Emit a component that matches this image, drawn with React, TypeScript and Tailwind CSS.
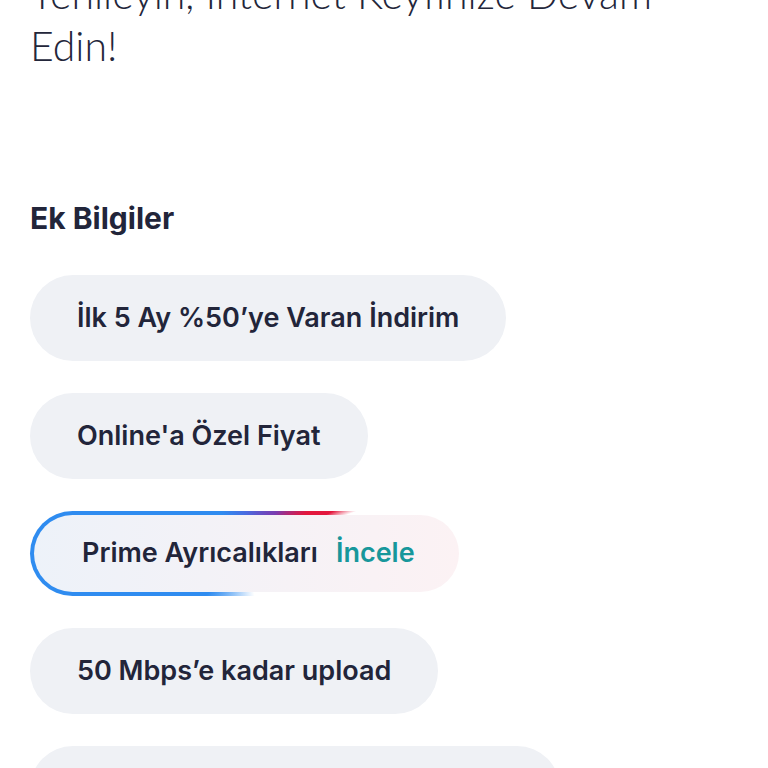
const items = [
  "İlk 5 Ay %50’ye Varan İndirim",
  "Online'a Özel Fiyat",
];

const moreItems = [
  "50 Mbps’e kadar upload",
  "Ücretsiz Kurulum, Modem Hediye",
];

function InfoPill({ label }: { label: string }) {
  return (
    <div className="h-[86px] rounded-full bg-[#eff1f5] px-[47px] flex items-center text-[27px] font-semibold text-[#22253a]">
      {label}
    </div>
  );
}

export default function App() {
  return (
    <div
      className="w-[768px] h-[768px] overflow-hidden bg-white"
      style={{ fontFamily: "Inter, 'Noto Sans', sans-serif" }}
    >
      <div className="px-[30px]">
        <h1
          className="mt-[-32px] text-[41px] leading-[52px] font-light text-[#23263a]"
          style={{ fontFamily: "Lato, sans-serif" }}
        >
          Yenileyin, İnternet Keyfinize Devam
          <br />
          Edin!
        </h1>

        <h2 className="mt-[127px] text-[30px] leading-[38px] font-bold text-[#22253a]">
          Ek Bilgiler
        </h2>

        <div className="mt-[38px] flex flex-col items-start gap-[32px]">
          {items.map((label) => (
            <InfoPill key={label} label={label} />
          ))}

          {/* highlighted pill with gradient border */}
          <div className="rounded-full p-[4px] bg-[conic-gradient(#4a6ae0_0deg,#7a3cb0_36deg,#e3173d_56deg,#e3173d_64deg,rgba(227,23,61,0)_69deg,rgba(47,140,240,0)_169deg,#2f8cf0_224deg,#2f8cf0_328deg,#4a6ae0_360deg)]">
            <div className="h-[77px] rounded-full bg-gradient-to-r from-[#edf2f9] to-[#fcf2f4] pl-[48px] pr-[44px] flex items-center gap-[18px] text-[27px] font-semibold">
              <span className="text-[#22253a]">Prime Ayrıcalıkları</span>
              <span className="text-[#17979b]">İncele</span>
            </div>
          </div>

          {moreItems.map((label) => (
            <InfoPill key={label} label={label} />
          ))}
        </div>
      </div>
    </div>
  );
}
